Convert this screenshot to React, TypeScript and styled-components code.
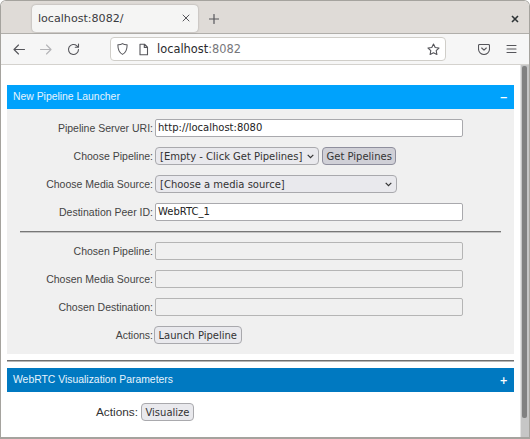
import React from "react"
import styled, { createGlobalStyle } from "styled-components"

const GlobalStyle = createGlobalStyle`
  html, body {
    margin: 0;
    padding: 0;
    height: 100%;
    overflow: hidden;
    background: #fff;
  }
  #root {
    height: 100%;
  }
`

const Window = styled.div`
  width: 530px;
  height: 439px;
  box-sizing: border-box;
  border: 1px solid #a5a39e;
  border-bottom-width: 2px;
  border-radius: 6px 6px 0 0;
  display: flex;
  flex-direction: column;
  overflow: hidden;
  font-family: "Liberation Sans", Arial, sans-serif;
`

const TabBar = styled.div`
  height: 33px;
  flex: none;
  background: #dfdbd7;
  border-bottom: 1px solid #b0aeaa;
  display: flex;
  align-items: center;
  padding: 3px 10px 0 31px;
  box-sizing: border-box;
`

const Tab = styled.div`
  width: 166px;
  height: 27px;
  margin-bottom: 1px;
  box-sizing: border-box;
  background: #f5f5f4;
  border-radius: 4px;
  box-shadow: 0 0 2px rgba(0, 0, 0, 0.3);
  display: flex;
  align-items: center;
  justify-content: space-between;
  padding: 0 8px 0 6px;
  font: 11.1px "DejaVu Sans", sans-serif;
  color: #3a3a3e;
`

const IconSlot = styled.span<{ $left?: number; $muted?: boolean; $push?: boolean }>`
  display: inline-flex;
  flex: none;
  margin-left: ${(p) => (p.$push ? "auto" : `${p.$left ?? 0}px`)};
  color: ${(p) => (p.$muted ? "#b4b4b7" : "#56565b")};
`

const CloseWindow = styled.span`
  margin-left: auto;
  display: inline-flex;
  color: #2e3436;
`

const Toolbar = styled.div`
  height: 31px;
  flex: none;
  background: #f6f6f6;
  border-bottom: 1px solid #d4d2ce;
  box-sizing: border-box;
  display: flex;
  align-items: center;
  padding: 0 12px;
`

const UrlBar = styled.div`
  width: 336px;
  height: 24px;
  margin-left: 30px;
  box-sizing: border-box;
  background: #fff;
  border: 1px solid #d0cec9;
  border-radius: 4px;
  display: flex;
  align-items: center;
  padding: 0 5px;
  font: 11.4px "DejaVu Sans", sans-serif;
  color: #2a2a2e;
`

const Host = styled.span`
  margin-left: 8px;
`

const Port = styled.span`
  color: #77777b;
`

const Viewport = styled.div`
  flex: 1;
  min-height: 0;
  display: flex;
  background: #fff;
`

const Page = styled.div`
  flex: 1;
  min-width: 0;
  padding: 20px 6px 0;
`

const Scrollbar = styled.div`
  width: 9px;
  background: #c6c6c6;
  border-left: 1px solid #e4e4e4;
  box-sizing: border-box;
  padding: 1px 2px 0 1px;
`

const Thumb = styled.div`
  height: 352px;
  background: #818181;
  border-radius: 2px;
`

const PanelHeader = styled.div<{ $dark?: boolean }>`
  height: 24px;
  box-sizing: border-box;
  background: ${(p) => (p.$dark ? "#0079c1" : "#00a2fc")};
  color: #e6f4fd;
  font-size: 10.4px;
  display: flex;
  align-items: center;
  justify-content: space-between;
  padding: 0 6px 2px;
`

const Toggle = styled.span`
  font: bold 10px "DejaVu Sans", sans-serif;
  color: #fff;
  margin-top: 3px;
`

const PanelBody = styled.div`
  background: #f0f0f0;
  padding: 5px 13px 0;
  height: 245px;
  box-sizing: border-box;
`

const Row = styled.div`
  height: 28px;
  display: flex;
  align-items: center;
  color: #444;
  font-size: 10.5px;
`

const Label = styled.label`
  width: 133px;
  flex: none;
  margin-right: 2px;
  text-align: right;
  white-space: nowrap;
`

const Field = styled.div<{ $disabled?: boolean }>`
  width: 308px;
  height: 18px;
  box-sizing: border-box;
  padding: 0 2px;
  display: flex;
  align-items: center;
  background: ${(p) => (p.$disabled ? "#f0f0f0" : "#fff")};
  border: 1px solid ${(p) => (p.$disabled ? "#b5b5b5" : "#a9a9ad")};
  border-radius: 2px;
  font: 10px/16px "DejaVu Sans", sans-serif;
  color: #222;
`

const Select = styled.div<{ $width: number }>`
  width: ${(p) => p.$width}px;
  height: 18px;
  box-sizing: border-box;
  background: #e9e9ed;
  border: 1px solid #a9a9ad;
  border-radius: 4px;
  display: flex;
  align-items: center;
  justify-content: space-between;
  padding: 0 4px;
  font: 10px "DejaVu Sans", sans-serif;
  color: #333;
  white-space: nowrap;
`

const Button = styled.button<{ $active?: boolean }>`
  height: 18px;
  margin: 0 0 0 ${(p) => (p.$active ? 3 : -1)}px;
  padding: 0 3.5px;
  background: ${(p) => (p.$active ? "#d0d0d7" : "#e9e9ed")};
  border: 1px solid ${(p) => (p.$active ? "#8f8f9d" : "#a9a9ad")};
  border-radius: 4px;
  font: 10px "DejaVu Sans", sans-serif;
  color: #333;
`

const Divider = styled.hr`
  height: 0;
  margin: 5px 0 4px;
  border: none;
  border-top: 1px solid #777;
  border-bottom: 1px solid #c4c4c4;
`

const SectionRule = styled.hr`
  height: 0;
  margin: 6px 0;
  border: none;
  border-top: 1px solid #6f6f6f;
  border-bottom: 1px solid #b5b5b5;
`

const VisualizeRow = styled.div`
  display: flex;
  align-items: center;
  gap: 4px;
  padding: 11px 0 0 89px;
  font-size: 11.8px;
  color: #333;
`

const Chevron = () => (
  <svg width="7" height="5" viewBox="0 0 7 5" fill="none" stroke="#333" strokeWidth="1.2">
    <path d="M0.7 0.8l2.8 2.8 2.8-2.8" />
  </svg>
)

const strokeIcon = { fill: "none", stroke: "currentColor", strokeWidth: 1.1, strokeLinecap: "round", strokeLinejoin: "round" } as const

function ChosenRow({ label }: { label: string }) {
  return (
    <Row>
      <Label>{label}</Label>
      <Field $disabled />
    </Row>
  )
}

export default function App() {
  return (
    <>
      <GlobalStyle />
      <Window>
        <TabBar>
          <Tab>
            localhost:8082/
            <IconSlot>
              <svg width="8" height="8" viewBox="0 0 8 8" {...strokeIcon} strokeWidth={1}>
                <path d="M1 1l6 6M7 1l-6 6" />
              </svg>
            </IconSlot>
          </Tab>
          <IconSlot $left={11}>
            <svg width="10" height="10" viewBox="0 0 10 10" {...strokeIcon} strokeWidth={1.2}>
              <path d="M5 0.5v9M0.5 5h9" />
            </svg>
          </IconSlot>
          <CloseWindow>
            <svg width="8" height="8" viewBox="0 0 8 8" fill="none" stroke="currentColor" strokeWidth="1.6">
              <path d="M1 1l6 6M7 1l-6 6" />
            </svg>
          </CloseWindow>
        </TabBar>
        <Toolbar>
          <IconSlot>
            <svg width="12" height="11" viewBox="0 0 12 11" {...strokeIcon}>
              <path d="M11.5 5.5H1M5.5 1L1 5.5 5.5 10" />
            </svg>
          </IconSlot>
          <IconSlot $left={15} $muted>
            <svg width="12" height="11" viewBox="0 0 12 11" {...strokeIcon}>
              <path d="M0.5 5.5H11M6.5 1L11 5.5 6.5 10" />
            </svg>
          </IconSlot>
          <IconSlot $left={15}>
            <svg width="13" height="13" viewBox="0 0 13 13" {...strokeIcon}>
              <path d="M11.5 6.5a5 5 0 1 1-1.6-3.7L11.5 4.2M11.5 1v3.2H8.3" />
            </svg>
          </IconSlot>
          <UrlBar>
            <IconSlot>
              <svg width="13" height="14" viewBox="0 0 14 14" {...strokeIcon}>
                <path d="M7 1.2c1.5 1 3.4 1.3 5 1.2 0 4.5-1.4 8.5-5 10.4C3.4 10.9 2 6.9 2 2.4c1.6.1 3.5-.2 5-1.2z" />
              </svg>
            </IconSlot>
            <IconSlot $left={9}>
              <svg width="11" height="13" viewBox="0 0 11 13" {...strokeIcon}>
                <path d="M2 1.2h4.5L9.5 4.2v7.6H2zM6.3 1.4v3h3" />
              </svg>
            </IconSlot>
            <Host>
              localhost<Port>:8082</Port>
            </Host>
            <IconSlot $push>
              <svg width="13" height="13" viewBox="0 0 13 13" {...strokeIcon}>
                <path d="M6.5 1l1.7 3.5 3.8.5-2.8 2.7.7 3.8-3.4-1.8-3.4 1.8.7-3.8L1 5l3.8-.5z" />
              </svg>
            </IconSlot>
          </UrlBar>
          <IconSlot $left={32}>
            <svg width="12" height="12" viewBox="0 0 12 12" {...strokeIcon}>
              <path d="M1.5 1.5h9c.5 0 1 .4 1 1V6a5.5 5.5 0 0 1-11 0V2.5c0-.6.5-1 1-1zM3.7 5L6 7.2 8.3 5" />
            </svg>
          </IconSlot>
          <IconSlot $left={16}>
            <svg width="11" height="10" viewBox="0 0 11 10" {...strokeIcon}>
              <path d="M1 1.5h9M1 5h9M1 8.5h9" />
            </svg>
          </IconSlot>
        </Toolbar>
        <Viewport>
          <Page>
            <PanelHeader>
              New Pipeline Launcher
              <Toggle>−</Toggle>
            </PanelHeader>
            <PanelBody>
              <Row>
                <Label>Pipeline Server URI:</Label>
                <Field>http://localhost:8080</Field>
              </Row>
              <Row>
                <Label>Choose Pipeline:</Label>
                <Select $width={164}>
                  [Empty - Click Get Pipelines]
                  <Chevron />
                </Select>
                <Button $active>Get Pipelines</Button>
              </Row>
              <Row>
                <Label>Choose Media Source:</Label>
                <Select $width={242}>
                  [Choose a media source]
                  <Chevron />
                </Select>
              </Row>
              <Row>
                <Label>Destination Peer ID:</Label>
                <Field>WebRTC_1</Field>
              </Row>
              <Divider />
              <ChosenRow label="Chosen Pipeline:" />
              <ChosenRow label="Chosen Media Source:" />
              <ChosenRow label="Chosen Destination:" />
              <Row>
                <Label>Actions:</Label>
                <Button>Launch Pipeline</Button>
              </Row>
            </PanelBody>
            <SectionRule />
            <PanelHeader $dark>
              WebRTC Visualization Parameters
              <Toggle>+</Toggle>
            </PanelHeader>
            <VisualizeRow>
              Actions:
              <Button>Visualize</Button>
            </VisualizeRow>
          </Page>
          <Scrollbar>
            <Thumb />
          </Scrollbar>
        </Viewport>
      </Window>
    </>
  )
}
